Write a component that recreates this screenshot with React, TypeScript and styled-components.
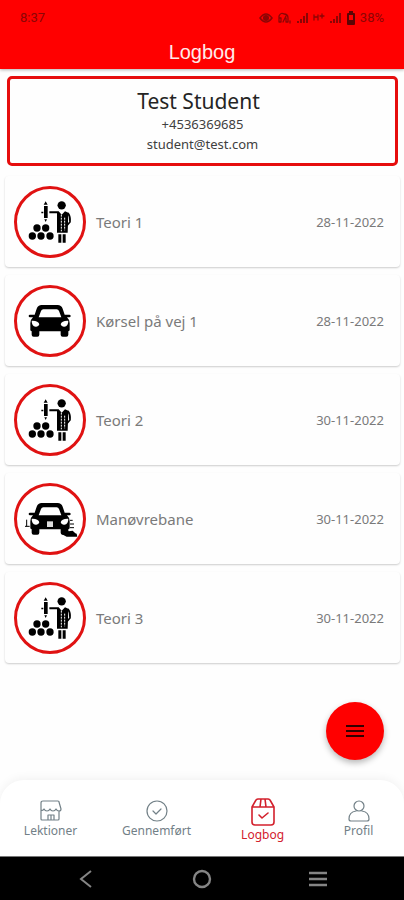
import React from "react";
import styled, { createGlobalStyle } from "styled-components";

const GlobalStyle = createGlobalStyle`
  * { box-sizing: border-box; }
  body { margin: 0; background: #fefefe; font-family: "Noto Sans", "Open Sans", sans-serif; }
  button { font-family: inherit; }
`;

const Screen = styled.div`
  min-height: 100vh;
  display: flex;
  flex-direction: column;
  background: #fefefe;
`;

const Header = styled.header`
  background: #ff0000;
  box-shadow: 0 1px 3px rgba(0, 0, 0, 0.3);
`;

const StatusBar = styled.div`
  height: 35px;
  padding: 0 20px;
  display: flex;
  align-items: center;
  justify-content: space-between;
  color: #8c0505;
  font: 13px/16px Roboto, sans-serif;
`;

const StatusIcons = styled.div`
  display: flex;
  align-items: center;
  gap: 4px;
`;

const Title = styled.h1`
  margin: 0;
  height: 34px;
  color: #ffeaea;
  text-align: center;
  font: 400 20px/34px "Liberation Sans", Arial, sans-serif;
`;

const Main = styled.main`
  flex: 1;
  position: relative;
  padding: 7px 4px 0 5px;
`;

const ProfileCard = styled.section`
  margin: 0 2px 10px;
  height: 90px;
  border: 3px solid #e60d0d;
  border-radius: 5px;
  background: #fefefe;
  display: flex;
  flex-direction: column;
  align-items: center;
  justify-content: center;
  color: #404040;
`;

const Name = styled.h2`
  margin: 0;
  padding-right: 8px;
  color: #242424;
  font-size: 21px;
  font-weight: 400;
  line-height: 26px;
`;

const Contact = styled.div`
  font-size: 13px;
  line-height: 20px;
`;

const List = styled.ul`
  list-style: none;
  margin: 0;
  padding: 0;
  display: flex;
  flex-direction: column;
  gap: 8px;
`;

const Lesson = styled.li`
  height: 91px;
  padding: 0 16px 0 9px;
  display: flex;
  align-items: center;
  gap: 10px;
  background: #fefefe;
  border-radius: 4px;
  box-shadow: 0 1px 2px rgba(0, 0, 0, 0.2);
`;

const Badge = styled.div`
  width: 72px;
  height: 72px;
  flex: none;
  border: 3px solid #e01212;
  border-radius: 50%;
  display: flex;
  align-items: center;
  justify-content: center;
  background: #fff;
`;

const LessonName = styled.span`
  flex: 1;
  color: #7a7a7a;
  font-size: 15px;
  line-height: 20px;
`;

const LessonDate = styled.time`
  color: #7a7a7a;
  font-size: 13px;
  line-height: 16px;
`;

const MenuButton = styled.button`
  position: absolute;
  right: 20px;
  bottom: 20px;
  width: 58px;
  height: 58px;
  padding: 0;
  border: 0;
  border-radius: 50%;
  background: #ff0000;
  box-shadow: 0 3px 6px rgba(0, 0, 0, 0.28);
  display: flex;
  align-items: center;
  justify-content: center;
`;

const Tabs = styled.nav`
  height: 76px;
  display: grid;
  grid-template-columns: 10fr 11fr 10fr 9fr;
  background: #fff;
  border-radius: 24px 24px 0 0;
  box-shadow: 0 -2px 10px rgba(0, 0, 0, 0.05);
`;

const Tab = styled.button<{ $active?: boolean }>`
  min-width: 0;
  border: 0;
  padding: ${(p) => (p.$active ? "4px 0 0" : "2px 0 0")};
  background: none;
  display: flex;
  flex-direction: column;
  align-items: center;
  justify-content: center;
  gap: 1px;
  color: ${(p) => (p.$active ? "#d3202c" : "#728087")};
  font-size: 12px;
  line-height: 16px;
`;

const SystemBar = styled.div`
  height: 44px;
  display: flex;
  align-items: center;
  justify-content: space-between;
  padding: 0 74px;
  background: #000;
  border-top: 1px solid #777;
`;

const SystemButton = styled.button`
  width: 24px;
  height: 24px;
  padding: 0;
  border: 0;
  background: none;
  color: #858585;
`;

const TheoryIcon = () => (
  <svg width="66" height="66" viewBox="9 9 198 198" fill="#000" aria-hidden="true">
    {[[55, 150], [81, 150], [108, 150], [69, 126], [95, 126]].map(([x, y]) => (
      <circle key={`${x}-${y}`} cx={x} cy={y} r="11" />
    ))}
    <path d="M95 46l6 10H89zM90 60h11v36H90zM91 100h8l-4 8zM82 77h6v5h-6z" />
    <circle cx="143" cy="58" r="12.5" />
    <path d="M106 76h28l9 10 10-10 10 4-2 60h-32V82h-23z" />
    <path d="M142 86v50M152 95v38" stroke="#fff" strokeWidth="3" strokeDasharray="6 3" />
    <path d="M162 81q8 12 6 27l-9 10" fill="none" stroke="#000" strokeWidth="5" />
    <path d="M133 145h9v25h-9zM146 145h9v25h-9z" />
  </svg>
);

const CarIcon = ({ track = false }: { track?: boolean }) => (
  <svg width="66" height="66" viewBox="9 9 198 198" fill="#000" aria-hidden="true">
    <path
      fillRule="evenodd"
      d="M62 89l6-18q4-11 15-11h48q11 0 15 11l6 18h14q4 0 4 4t-4 4h-7q8 7 8 18v20q0 3-4 4v10q0 6-6 6h-11q-6 0-6-6v-10H76v10q0 6-6 6H59q-6 0-6-6v-10q-4-1-4-4v-20q0-11 8-18h-9q-4 0-4-4t4-4zM74 97h68l-7-19q-2-5-7-5H88q-5 0-7 5z"
    />
    <path d="M53 107q20-1 23 11-2 8-11 7-12-1-12-18zM163 107q-20-1-23 11 2 8 11 7 12-1 12-18z" fill="#fff" />
    {track && (
      <>
        <path d="M99 115h18v17H99z" fill="#ddd" />
        <path d="M38 110v20M33 130h14M168 112h8M168 123h12M168 134h12" stroke="#000" strokeWidth="3" />
        <path d="M145 146l11-8 8 7 12-2 8 8 4 1 2 9h-32l-14-7z" />
      </>
    )}
  </svg>
);

const Signal = () => (
  <svg width="13" height="12" viewBox="0 0 13 12" fill="currentColor" aria-hidden="true">
    <path d="M1 9h2v2H1zM4 7h2v4H4zM7 4h2v7H7zM10 1h2v10h-2z" />
  </svg>
);

const line = { fill: "none", stroke: "currentColor", strokeLinecap: "round", strokeLinejoin: "round" } as const;

const ShopIcon = () => (
  <svg width="22" height="22" viewBox="0 0 22 22" {...line} strokeWidth="1.2" aria-hidden="true">
    <path d="M3 1h15q1 0 1 1l2 7q0 2-2 2t-3-2q-1 2-3 2t-3-2q-1 2-3 2T4 9q-1 2-3 1V3q0-2 2-2zM1 10v9q0 1 1 1h16q1 0 1-1v-8M8 20v-5h6v5M11 15v5" />
  </svg>
);

const DoneIcon = () => (
  <svg width="22" height="22" viewBox="0 0 22 22" {...line} strokeWidth="1.2" aria-hidden="true">
    <circle cx="11" cy="11" r="10" />
    <path d="M7 11l3 3 5-5" />
  </svg>
);

const BoxIcon = () => (
  <svg width="24" height="28" viewBox="0 0 24 28" {...line} strokeWidth="1.6" aria-hidden="true">
    <path d="M1 9l4-7q1-1 2-1h10q1 0 2 1l4 7v15q0 3-3 3H4q-3 0-3-3zM1 9h8l1-8M23 9h-8l-1-8M9 9h6M8 17l3 3 6-5" />
  </svg>
);

const PersonIcon = () => (
  <svg width="22" height="22" viewBox="0 0 22 22" {...line} strokeWidth="1.2" aria-hidden="true">
    <circle cx="11" cy="6" r="5" />
    <path d="M8 11q-7 1-7 8 0 2 2 2h16q2 0 2-2 0-7-7-8" />
  </svg>
);

type Kind = "theory" | "road" | "track";

const lessons: { name: string; date: string; kind: Kind }[] = [
  { name: "Teori 1", date: "28-11-2022", kind: "theory" },
  { name: "Kørsel på vej 1", date: "28-11-2022", kind: "road" },
  { name: "Teori 2", date: "30-11-2022", kind: "theory" },
  { name: "Manøvrebane", date: "30-11-2022", kind: "track" },
  { name: "Teori 3", date: "30-11-2022", kind: "theory" },
];

export default function App() {
  return (
    <Screen>
      <GlobalStyle />
      <Header>
        <StatusBar>
          <span>8:37</span>
          <StatusIcons>
            <svg width="14" height="12" viewBox="0 0 14 12" aria-hidden="true">
              <path d="M1 6q6-8 12 0-6 8-12 0z" fill="none" stroke="currentColor" strokeWidth="1.5" />
              <circle cx="7" cy="6" r="3" fill="currentColor" />
            </svg>
            <svg width="15" height="12" viewBox="0 0 15 12" {...line} strokeWidth="1.3" aria-hidden="true">
              <path d="M2 6V4q2-4 5-2M2 6v4h2V6zM7 2q4 0 4 4v4H9V6M6 10l3-6M13 9v2" />
            </svg>
            <Signal />
            <svg width="12" height="12" viewBox="0 0 12 12" {...line} strokeWidth="1.3" aria-hidden="true">
              <path d="M1 3v5M5 3v5M1 5h4M7 4h4M9 2v4" />
            </svg>
            <Signal />
            <svg width="10" height="14" viewBox="0 0 10 14" aria-hidden="true">
              <path
                d="M3 0h4v2h1q1 0 1 1v10q0 1-1 1H2q-1 0-1-1V3q0-1 1-1h1zM3 4v5h4V4z"
                fill="#5c0505"
                fillRule="evenodd"
              />
            </svg>
            <span>38%</span>
          </StatusIcons>
        </StatusBar>
        <Title>Logbog</Title>
      </Header>
      <Main>
        <ProfileCard>
          <Name>Test Student</Name>
          <Contact>+4536369685</Contact>
          <Contact>student@test.com</Contact>
        </ProfileCard>
        <List>
          {lessons.map((l) => (
            <Lesson key={l.name}>
              <Badge>{l.kind === "theory" ? <TheoryIcon /> : <CarIcon track={l.kind === "track"} />}</Badge>
              <LessonName>{l.name}</LessonName>
              <LessonDate>{l.date}</LessonDate>
            </Lesson>
          ))}
        </List>
        <MenuButton aria-label="Menu">
          <svg width="18" height="14" viewBox="0 0 18 14" fill="#300" aria-hidden="true">
            <path d="M0 1h18v2H0zM0 6h18v2H0zM0 11h18v2H0z" />
          </svg>
        </MenuButton>
      </Main>
      <Tabs>
        <Tab>
          <ShopIcon />
          Lektioner
        </Tab>
        <Tab>
          <DoneIcon />
          Gennemført
        </Tab>
        <Tab $active aria-current="page">
          <BoxIcon />
          Logbog
        </Tab>
        <Tab>
          <PersonIcon />
          Profil
        </Tab>
      </Tabs>
      <SystemBar>
        <SystemButton aria-label="Back">
          <svg width="24" height="24" viewBox="0 0 24 24" fill="none" stroke="currentColor" strokeWidth="2">
            <path d="M17 4L7 12l10 8" />
          </svg>
        </SystemButton>
        <SystemButton aria-label="Home">
          <svg width="24" height="24" viewBox="0 0 24 24" fill="none" stroke="currentColor" strokeWidth="2.4">
            <circle cx="12" cy="12" r="8" />
          </svg>
        </SystemButton>
        <SystemButton aria-label="Recent apps">
          <svg width="24" height="24" viewBox="0 0 24 24" fill="none" stroke="currentColor" strokeWidth="2.4">
            <path d="M3 6h18M3 12h18M3 18h18" />
          </svg>
        </SystemButton>
      </SystemBar>
    </Screen>
  );
}
